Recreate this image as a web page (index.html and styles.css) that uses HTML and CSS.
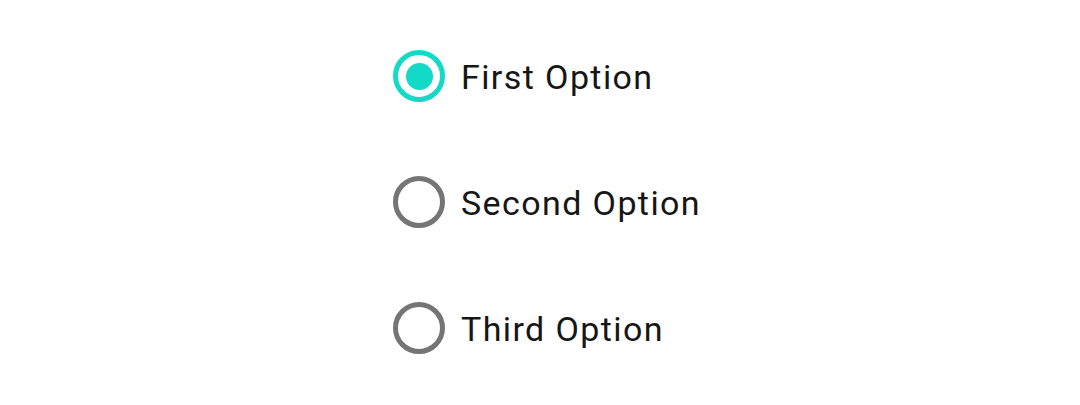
FILE: index.html
```html
<!DOCTYPE html>
<html>
<head>
<meta charset="utf-8">
<link rel="stylesheet" href="styles.css">
</head>
<body>
<div class="group">
  <label class="option">
    <span class="radio checked"><span class="dot"></span></span>
    <span class="label">First Option</span>
  </label>
  <label class="option">
    <span class="radio"></span>
    <span class="label">Second Option</span>
  </label>
  <label class="option">
    <span class="radio"></span>
    <span class="label">Third Option</span>
  </label>
</div>
</body>
</html>
```
FILE: styles.css
```css
html, body {
  margin: 0;
  background: #ffffff;
}
body {
  width: 1080px;
  height: 405px;
  overflow: hidden;
  font-family: Roboto, "Noto Sans", sans-serif;
}
.group {
  display: flex;
  flex-direction: column;
  padding: 13px 0 0 393px;
}
.option {
  display: flex;
  align-items: center;
  height: 126px;
  gap: 16px;
}
.radio {
  box-sizing: border-box;
  width: 52px;
  height: 52px;
  border: 5px solid #757575;
  border-radius: 50%;
  display: flex;
  align-items: center;
  justify-content: center;
  flex: none;
}
.radio.checked {
  border-color: #13d9c6;
}
.dot {
  width: 27px;
  height: 27px;
  border-radius: 50%;
  background: #13d9c6;
}
.label {
  font-size: 34px;
  letter-spacing: 1.4px;
  color: #161616;
  line-height: 1;
  padding-top: 2px;
}
```
